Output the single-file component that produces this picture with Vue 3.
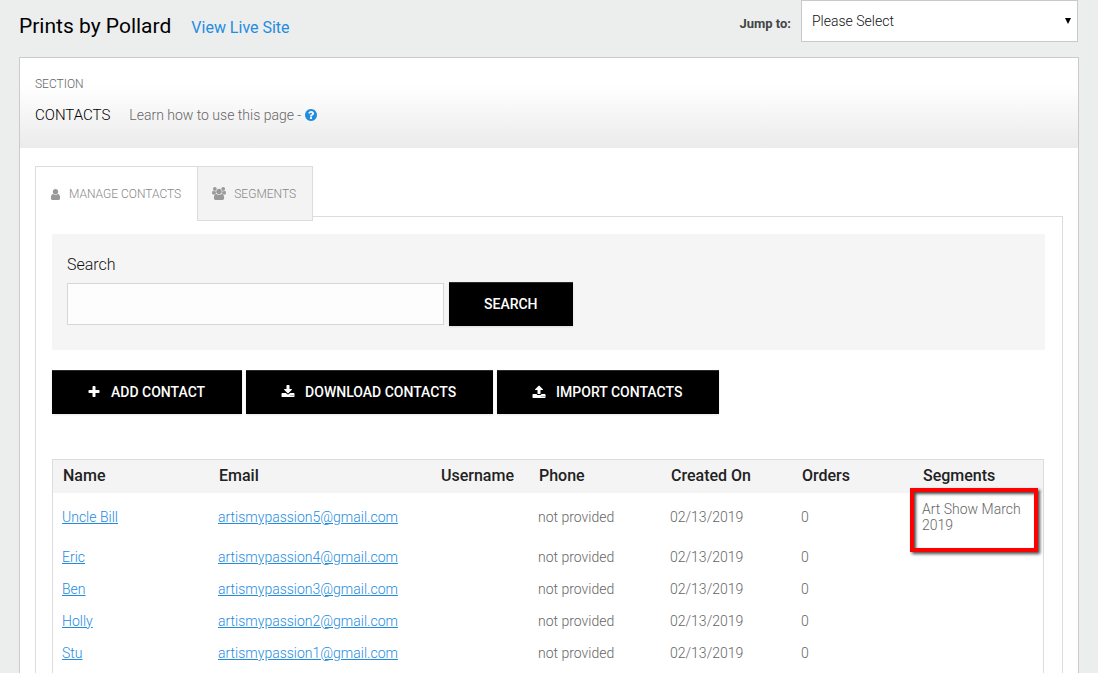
<script setup>
import { ref } from 'vue'

const query = ref('')
const section = ref('')

const columns = ['Name', 'Email', 'Username', 'Phone', 'Created On', 'Orders', 'Segments']

const contacts = [
  { name: 'Uncle Bill', email: 'artismypassion5@gmail.com', segment: 'Art Show March 2019' },
  { name: 'Eric', email: 'artismypassion4@gmail.com' },
  { name: 'Ben', email: 'artismypassion3@gmail.com' },
  { name: 'Holly', email: 'artismypassion2@gmail.com' },
  { name: 'Stu', email: 'artismypassion1@gmail.com' },
]

const actions = [
  {
    label: 'ADD CONTACT',
    icon: 'M1600 736v192q0 40-28 68t-68 28h-416v416q0 40-28 68t-68 28h-192q-40 0-68-28t-28-68v-416h-416q-40 0-68-28t-28-68v-192q0-40 28-68t68-28h416v-416q0-40 28-68t68-28h192q40 0 68 28t28 68v416h416q40 0 68 28t28 68z',
  },
  {
    label: 'DOWNLOAD CONTACTS',
    icon: 'M1344 1344q0-26-19-45t-45-19-45 19-19 45 19 45 45 19 45-19 19-45zm256 0q0-26-19-45t-45-19-45 19-19 45 19 45 45 19 45-19 19-45zm128-224v320q0 40-28 68t-68 28h-1472q-40 0-68-28t-28-68v-320q0-40 28-68t68-28h465l135 136q58 56 136 56t136-56l136-136h464q40 0 68 28t28 68zm-325-569q17 41-14 70l-448 448q-18 19-45 19t-45-19l-448-448q-31-29-14-70 17-39 59-39h256v-448q0-26 19-45t45-19h256q26 0 45 19t19 45v448h256q42 0 59 39z',
  },
  {
    label: 'IMPORT CONTACTS',
    icon: 'M1344 1472q0-26-19-45t-45-19-45 19-19 45 19 45 45 19 45-19 19-45zm256 0q0-26-19-45t-45-19-45 19-19 45 19 45 45 19 45-19 19-45zm128-224v320q0 40-28 68t-68 28h-1472q-40 0-68-28t-28-68v-320q0-40 28-68t68-28h427q21 56 70.5 92t110.5 36h256q61 0 110.5-36t70.5-92h427q40 0 68 28t28 68zm-325-648q-17 40-59 40h-256v448q0 26-19 45t-45 19h-256q-26 0-45-19t-19-45v-448h-256q-42 0-59-40-17-39 14-69l448-448q18-19 45-19t45 19l448 448q31 30 14 69z',
  },
]
</script>

<template>
  <div class="page">
    <header class="topbar">
      <h1>Prints by Pollard</h1>
      <a class="live" href="#">View Live Site</a>
      <label class="jump-label" for="jump">Jump to:</label>
      <div class="jump">
        <select id="jump" v-model="section">
          <option value="">Please Select</option>
        </select>
        <svg class="arrow" viewBox="0 0 6 6" aria-hidden="true"><path d="M0 0h6L3 6z" /></svg>
      </div>
    </header>

    <main class="panel">
      <div class="section-head">
        <p class="eyebrow">SECTION</p>
        <div class="section-line">
          <h2>CONTACTS</h2>
          <span class="help-text">Learn how to use this page -</span>
          <a class="help" href="#" aria-label="Help">
            <svg viewBox="128 128 1536 1536"><path d="M1024 1376v-192q0-14-9-23t-23-9h-192q-14 0-23 9t-9 23v192q0 14 9 23t23 9h192q14 0 23-9t9-23zm256-672q0-88-55.500-163t-138.500-116-170-41q-243 0-371 213-15 24 8 42l132 100q7 6 19 6 16 0 25-12 53-68 86-92 34-24 86-24 48 0 85.500 26t37.500 59q0 38-20 61t-68 45q-63 28-115.500 86.500t-52.500 125.500v36q0 14 9 23t23 9h192q14 0 23-9t9-23q0-19 21.500-49.500t54.500-49.500q32-18 49-28.500t46-35 44.500-48 28-60.500 12.500-81zm384 192q0 209-103 385.500t-279.500 279.500-385.500 103-385.500-103-279.500-279.500-103-385.500 103-385.500 279.500-279.500 385.500-103 385.500 103 279.500 279.500 103 385.500z" /></svg>
          </a>
        </div>
      </div>

      <div class="workspace">
        <nav class="tabs">
          <a class="tab active" href="#">
            <svg class="user" viewBox="256 128 1280 1536" aria-hidden="true"><path d="M1536 1399q0 109-62.500 187t-150.500 78h-854q-88 0-150.500-78t-62.500-187q0-85 8.500-160.500t31.500-152 58.500-131 94-89 134.500-34.500q131 128 313 128t313-128q76 0 134.500 34.500t94 89 58.500 131 31.500 152 8.500 160.500zm-256-887q0 159-112.500 271.500t-271.500 112.500-271.500-112.500-112.500-271.500 112.500-271.500 271.500-112.500 271.500 112.500 112.500 271.500z" /></svg>
            <span>MANAGE CONTACTS</span>
          </a>
          <a class="tab" href="#">
            <svg class="users" viewBox="0 0 1920 1792" aria-hidden="true"><path d="M593 896q-162 5-265 128h-134q-82 0-138-40.500t-56-118.500q0-353 124-353 6 0 43.500 21t97.500 42.500 119 21.500q67 0 133-23-5 37-5 66 0 139 81 256zm1071 637q0 120-73 189.500t-194 69.500h-874q-121 0-194-69.500t-73-189.500q0-53 3.500-103.500t14-109 26.500-108.500 43-97.500 62-81 85.500-53.500 111.500-20q10 0 43 21.500t73 48 107 48 135 21.500 135-21.500 107-48 73-48 43-21.500q61 0 111.500 20t85.500 53.500 62 81 43 97.500 26.500 108.500 14 109 3.500 103.500zm-1024-1277q0 106-75 181t-181 75-181-75-75-181 75-181 181-75 181 75 75 181zm704 384q0 159-112.500 271.500t-271.500 112.500-271.500-112.500-112.500-271.500 112.500-271.500 271.500-112.500 271.500 112.500 112.500 271.500zm576 225q0 78-56 118.500t-138 40.500h-134q-103-123-265-128 81-117 81-256 0-29-5-66 66 23 133 23 59 0 119-21.500t97.500-42.500 43.500-21q124 0 124 353zm-128-609q0 106-75 181t-181 75-181-75-75-181 75-181 181-75 181 75 75 181z" /></svg>
            <span>SEGMENTS</span>
          </a>
        </nav>

        <section class="tab-body">
          <form class="search" @submit.prevent>
            <label for="query">Search</label>
            <div class="search-row">
              <input id="query" v-model="query" type="text" />
              <button class="btn" type="submit">SEARCH</button>
            </div>
          </form>

          <div class="actions">
            <button v-for="action in actions" :key="action.label" class="btn" type="button">
              <svg viewBox="64 0 1664 1792" aria-hidden="true"><path :d="action.icon" /></svg>
              <span>{{ action.label }}</span>
            </button>
          </div>

          <div class="table-box">
            <table>
              <colgroup>
                <col class="c-name" />
                <col class="c-email" />
                <col class="c-username" />
                <col class="c-phone" />
                <col class="c-created" />
                <col class="c-orders" />
                <col />
              </colgroup>
              <thead>
                <tr>
                  <th v-for="column in columns" :key="column" scope="col">{{ column }}</th>
                </tr>
              </thead>
              <tbody>
                <tr v-for="contact in contacts" :key="contact.email">
                  <td><a href="#">{{ contact.name }}</a></td>
                  <td><a href="#">{{ contact.email }}</a></td>
                  <td></td>
                  <td>not provided</td>
                  <td>02/13/2019</td>
                  <td>0</td>
                  <td class="segment">
                    {{ contact.segment }}
                    <span v-if="contact.segment" class="callout"></span>
                  </td>
                </tr>
              </tbody>
            </table>
          </div>
        </section>
      </div>
    </main>
  </div>
</template>

<style>
body {
  background: #eceeee;
}
</style>

<style scoped>
.page {
  box-sizing: border-box;
  min-height: 100vh;
  display: flex;
  flex-direction: column;
  padding: 0 19px;
  font-family: Roboto, "Liberation Sans", sans-serif;
  font-size: 14px;
  font-weight: 300;
  line-height: 16px;
  color: #666;
}
.page * {
  box-sizing: border-box;
}
a {
  color: #1f8ce0;
}
svg {
  fill: currentColor;
  flex: none;
}

.topbar {
  display: flex;
  align-items: flex-start;
  height: 57px;
}
h1 {
  margin: 13px 20px 0 0;
  font-size: 21px;
  line-height: 26px;
  font-weight: 400;
  color: #000;
}
.live {
  margin-top: 18px;
  font-size: 16px;
  line-height: 20px;
  font-weight: 400;
  text-decoration: none;
}
.jump-label {
  margin: 16px 10px 0 auto;
  font-size: 13px;
  font-weight: 700;
  color: #444;
}
.jump {
  position: relative;
  width: 277px;
  margin-right: 1px;
}
.jump select {
  display: block;
  width: 100%;
  height: 42px;
  padding: 0 10px;
  border: 1px solid #c8cac9;
  border-radius: 0;
  background: #fff;
  appearance: none;
  font: inherit;
  color: #111;
}
.arrow {
  position: absolute;
  top: 18px;
  right: 7px;
  width: 6px;
  height: 6px;
  color: #000;
}

.panel {
  flex: 1;
  display: flex;
  flex-direction: column;
  border: 1px solid #c9cccb;
  border-bottom: 0;
  background: #fff;
}
.section-head {
  height: 90px;
  padding: 18px 15px 0;
  background: linear-gradient(#fff 30%, #ebebeb);
}
.eyebrow {
  margin: 0;
  font-size: 12px;
}
.section-line {
  display: flex;
  align-items: center;
  margin-top: 15px;
}
h2 {
  margin: 0 19px 0 0;
  font-size: 15px;
  font-weight: 300;
  color: #000;
}
.help {
  margin-left: 4px;
}
.help svg {
  display: block;
  width: 12px;
  height: 12px;
}

.workspace {
  flex: 1;
  display: flex;
  flex-direction: column;
  padding: 18px 15px 0;
}
.tabs {
  position: relative;
  display: flex;
  height: 50px;
}
.tab {
  display: flex;
  align-items: center;
  height: 55px;
  padding: 0 16px 0 14px;
  border: 1px solid #dcdcdc;
  background: #f3f3f3;
  font-size: 12px;
  text-decoration: none;
  color: #888;
}
.tab.active {
  border-width: 1px 0 0 1px;
  background: #fff;
}
.tab svg {
  margin-right: 8px;
  color: #999;
}
.tab .user {
  width: 11px;
  height: 11px;
}
.tab .users {
  width: 14px;
  height: 13px;
}
.tab-body {
  flex: 1;
  display: flex;
  flex-direction: column;
  padding: 17px 17px 0 16px;
  border: 1px solid #dcdcdc;
  border-bottom: 0;
}
.search {
  padding: 21px 15px 24px;
  background: #f5f5f5;
}
.search label {
  display: block;
  font-size: 16px;
  line-height: 20px;
  color: #111;
}
.search-row {
  display: flex;
  align-items: center;
  margin-top: 7px;
  gap: 5px;
}
.search input {
  width: 377px;
  height: 42px;
  padding: 0 10px;
  border: 1px solid #d6d6d6;
  background: #fdfdfd;
  font: inherit;
}
.btn {
  display: flex;
  align-items: center;
  height: 44px;
  padding: 0 35px 2px;
  border: 0;
  border-top: 1px solid #2b2b2b;
  background: #000;
  box-shadow: 0 1px 2px rgba(0, 0, 0, 0.1);
  font: inherit;
  font-weight: 500;
  color: #fff;
}
.btn svg {
  width: 14px;
  height: 14px;
  margin-right: 10px;
}
.actions {
  display: flex;
  gap: 4px;
  margin: 20px 0 45px;
}
.actions .btn {
  padding-right: 37px;
}

.table-box {
  flex: 1;
  margin-right: 1px;
  border: 1px solid #dcdcdc;
  border-bottom: 0;
}
table {
  width: 100%;
  table-layout: fixed;
  border-collapse: collapse;
}
.c-name { width: 156px; }
.c-email { width: 222px; }
.c-username { width: 98px; }
.c-phone { width: 132px; }
.c-created { width: 131px; }
.c-orders { width: 121px; }
th {
  height: 33px;
  padding: 0 10px 2px;
  background: #f4f4f4;
  font-size: 16px;
  font-weight: 500;
  text-align: left;
  color: #222;
}
td {
  height: 32px;
  padding: 8px 9px;
}
.segment {
  position: relative;
}
.callout {
  position: absolute;
  top: -5px;
  left: -3px;
  right: 5px;
  height: 64px;
  border: 4px solid #f00;
  box-shadow: 2px 2px 3px rgba(0, 0, 0, 0.7), inset 2px 2px 3px rgba(0, 0, 0, 0.7);
}
</style>
